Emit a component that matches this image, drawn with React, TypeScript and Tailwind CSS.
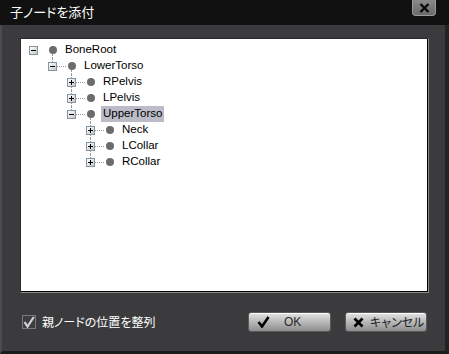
import React from "react";

type Node = { label: string; level: number; expanded?: boolean; last: boolean; selected?: boolean };

const nodes: Node[] = [
  { label: "BoneRoot", level: 0, expanded: true, last: true },
  { label: "LowerTorso", level: 1, expanded: true, last: true },
  { label: "RPelvis", level: 2, expanded: false, last: false },
  { label: "LPelvis", level: 2, expanded: false, last: false },
  { label: "UpperTorso", level: 2, expanded: true, last: true, selected: true },
  { label: "Neck", level: 3, expanded: false, last: false },
  { label: "LCollar", level: 3, expanded: false, last: false },
  { label: "RCollar", level: 3, expanded: false, last: true },
];

const indents = [0, 19, 38, 57];

function Expander({ expanded }: { expanded?: boolean }) {
  return (
    <div className="relative w-[9px] h-[9px] border border-[#8594a5] bg-gradient-to-br from-white to-[#c8c8c0] z-10">
      <div className="absolute left-[1px] top-[3px] w-[5px] h-[1px] bg-black" />
      {!expanded && <div className="absolute left-[3px] top-[1px] w-[1px] h-[5px] bg-black" />}
    </div>
  );
}

function Row({ n }: { n: Node }) {
  return (
    <div className="relative h-[16px] flex items-center">
      <div style={{ width: indents[n.level] }} className="shrink-0" />
      <div className="relative w-[19px] h-[16px] shrink-0 flex items-center justify-center">
        {n.level > 0 && (
          <div className="absolute left-[9px] top-0 h-[8px] border-l border-dotted border-[#9a9a9a]" />
        )}
        {n.level > 0 && !n.last && (
          <div className="absolute left-[9px] top-[8px] h-[8px] border-l border-dotted border-[#9a9a9a]" />
        )}
        {n.level > 0 && (
          <div className="absolute left-[14px] top-[8px] w-[9px] border-t border-dotted border-[#9a9a9a]" />
        )}
        <Expander expanded={n.expanded} />
      </div>
      <div className="relative w-[19px] h-[16px] shrink-0 flex items-center justify-center">
        {n.expanded && (
          <div className="absolute left-[9px] top-[12px] h-[4px] border-l border-dotted border-[#9a9a9a]" />
        )}
        <div className="relative w-[8px] h-[8px] rounded-full bg-[#6c6c6c] z-10" />
      </div>
      <div
        className={
          "ml-[1px] h-[16px] px-[2px] flex items-center text-[11.5px] leading-none text-black " +
          (n.selected ? "bg-[#bcbcc8]" : "")
        }
      >
        {n.label}
      </div>
    </div>
  );
}

export default function App() {
  const font = { fontFamily: '"Liberation Sans", "Noto Sans CJK JP", sans-serif' };
  const jp = { fontFamily: '"Noto Sans CJK JP", sans-serif' };
  return (
    <div className="w-[449px] h-[354px] flex flex-col bg-[#111111] overflow-hidden" style={font}>
      <div className="h-[25px] shrink-0 flex items-start bg-[#111111] relative">
        <div
          className="pl-[10px] pt-[4px] text-[13px] leading-[16px] text-white [font-feature-settings:'palt']"
          style={jp}
        >
          子ノードを添付
        </div>
        <div className="absolute left-[412px] top-0 w-[24px] h-[16px] rounded-b-[4px] bg-gradient-to-b from-[#8a8a8a] to-[#6a6a6a] border border-t-0 border-[#9a9a9a] flex items-center justify-center">
          <svg width="11" height="10" viewBox="0 0 11 10">
            <path d="M1.5 1 L9.5 9 M9.5 1 L1.5 9" stroke="#0a0a0a" strokeWidth="2.4" />
          </svg>
        </div>
      </div>
      <div className="flex-1 flex flex-col bg-[#3b3b3d] border-l-[2px] border-l-[#4c4c4e] border-r-[4px] border-r-[#232323] border-b-[3px] border-b-[#1c1c1c] pl-[18px] pr-[16px]">
        <div className="mt-[13px] h-[255px] border-t border-l border-[#2a2a2a] border-r border-b border-r-[#8a8a8a] border-b-[#8a8a8a]">
          <div className="w-full h-full bg-white border-r border-b border-black pt-[3px] pl-[3px]">
            {nodes.map((n) => (
              <Row key={n.label} n={n} />
            ))}
          </div>
        </div>
        <div className="mt-[19px] h-[20px] flex items-center">
          <div className="ml-[2px] w-[14px] h-[14px] border border-[#7a7a7a] bg-[#3e3e40] flex items-center justify-center">
            <svg width="12" height="12" viewBox="0 0 12 12">
              <path d="M1.5 6 L4.5 10.5 L10.8 1" stroke="#d4d4d4" strokeWidth="2.2" fill="none" />
            </svg>
          </div>
          <div
            className="ml-[6px] text-[12px] leading-none text-white whitespace-nowrap [font-feature-settings:'palt']"
            style={jp}
          >
            親ノードの位置を整列
          </div>
          <div className="flex-1" />
          <button className="relative shrink-0 w-[83px] h-[20px] rounded-[3px] border border-[#5a5a5a] bg-gradient-to-b from-[#e4e4e4] via-[#b8b8b8] to-[#8e8e8e] shadow-[inset_0_1px_0_#ffffff] flex items-center">
            <svg className="ml-[8px]" width="13" height="12" viewBox="0 0 13 12">
              <path d="M1.5 6 L5 10.5 L11.5 1" stroke="#000" strokeWidth="2.6" fill="none" />
            </svg>
            <span className="absolute left-[35px] top-[3px] text-[12px] leading-[13px] text-[#2a2a2a]">OK</span>
          </button>
          <button className="ml-[14px] mr-[2px] relative shrink-0 w-[82px] h-[20px] rounded-[3px] border border-[#5a5a5a] bg-gradient-to-b from-[#e4e4e4] via-[#b8b8b8] to-[#8e8e8e] shadow-[inset_0_1px_0_#ffffff] flex items-center overflow-hidden">
            <svg className="ml-[7px] shrink-0" width="11" height="11" viewBox="0 0 11 11">
              <path d="M1.5 1.5 L9.5 9.5 M9.5 1.5 L1.5 9.5" stroke="#000" strokeWidth="2.6" />
            </svg>
            <span
              className="ml-[6px] text-[12px] leading-none text-[#222] whitespace-nowrap [font-feature-settings:'palt']"
              style={jp}
            >
              キャンセル
            </span>
          </button>
        </div>
      </div>
    </div>
  );
}
